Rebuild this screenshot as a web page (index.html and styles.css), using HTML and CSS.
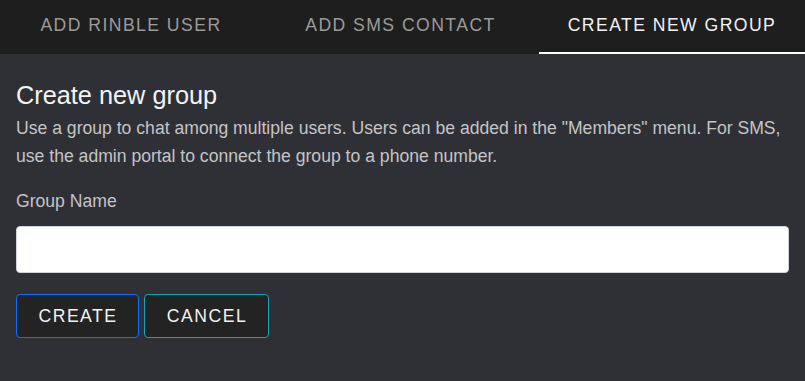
FILE: index.html
```html
<!DOCTYPE html>
<html>
<head>
<meta charset="utf-8">
<link rel="stylesheet" href="styles.css">
</head>
<body>
<nav class="tabs">
  <div class="tab">ADD RINBLE USER</div>
  <div class="tab">ADD SMS CONTACT</div>
  <div class="tab active">CREATE NEW GROUP</div>
</nav>
<main class="content">
  <h2 class="title">Create new group</h2>
  <p class="desc">Use a group to chat among multiple users. Users can be added in the "Members" menu. For SMS, use the admin portal to connect the group to a phone number.</p>
  <label class="label" for="gname">Group Name</label>
  <input class="input" id="gname" type="text">
  <div class="actions">
    <button class="btn btn-primary">CREATE</button>
    <button class="btn btn-info">CANCEL</button>
  </div>
</main>
</body>
</html>
```
FILE: styles.css
```css
html, body {
  margin: 0;
  padding: 0;
  height: 100%;
}
body {
  background: #2f3036;
  font-family: "Liberation Sans", Arial, sans-serif;
  font-size: 17.6px;
  color: #c9c9cb;
}
.tabs {
  display: grid;
  grid-template-columns: 262px 277px 266px;
  height: 54px;
  background: #1e1e1e;
}
.tab {
  box-sizing: border-box;
  height: 54px;
  padding-top: 15px;
  line-height: 20px;
  text-align: center;
  font-size: 17.6px;
  letter-spacing: 1.45px;
  color: #9b9b9b;
}
.tab.active {
  color: #f2f2f2;
  border-bottom: 2px solid #ffffff;
}
.content {
  padding: 26px 16px 0 16px;
}
.title {
  margin: 0;
  font-size: 25.3px;
  line-height: 30.4px;
  font-weight: normal;
  color: #f4f4f4;
}
.desc {
  margin: 4px 0 0 0;
  line-height: 28px;
  color: #c4c4c6;
}
.label {
  display: block;
  margin-top: 17px;
  line-height: 28px;
  color: #c4c4c6;
}
.input {
  display: block;
  box-sizing: border-box;
  width: 100%;
  height: 47px;
  margin-top: 11px;
  background: #ffffff;
  border: 1px solid #ced4da;
  border-radius: 4px;
  outline: none;
}
.actions {
  display: flex;
  gap: 5px;
  margin-top: 21px;
}
.btn {
  box-sizing: border-box;
  height: 44px;
  padding: 0;
  background: #232323;
  border: 1px solid;
  border-radius: 4px;
  color: #f2f2f2;
  font-family: "Liberation Sans", Arial, sans-serif;
  font-size: 17.6px;
  letter-spacing: 1.5px;
  text-align: center;
}
.btn-primary {
  border-color: #0d6efd;
  width: 123px;
  padding-left: 1px;
}
.btn-info {
  border-color: #17a2b8;
  width: 125px;
  padding-left: 1px;
}
```
